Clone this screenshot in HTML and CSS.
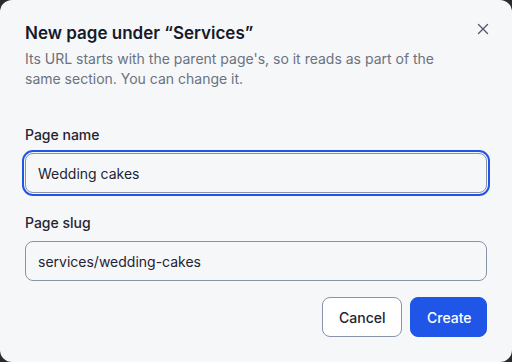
FILE: index.html
```html
<!DOCTYPE html>
<html lang="en">
<head>
    <meta charset="UTF-8">
    <meta name="viewport" content="width=device-width, initial-scale=1.0">
    <title>New page</title>
    <link rel="stylesheet" href="styles.css">
</head>
<body>
    <div class="dialog">
        <div class="dialog-head">
            <h1 class="title">New page under “Services”</h1>
            <button class="close" aria-label="Close">
                <svg width="12" height="12" viewBox="0 0 12 12">
                    <path d="M1.5 1.5l9 9M10.5 1.5l-9 9" stroke="#525b6e" stroke-width="1.4" stroke-linecap="round"/>
                </svg>
            </button>
        </div>
        <p class="desc">Its URL starts with the parent page's, so it reads as part of the same section. You can change it.</p>

        <form class="form">
            <div class="field">
                <label class="label" for="page-name">Page name</label>
                <input class="input focused" id="page-name" type="text" value="Wedding cakes">
            </div>
            <div class="field">
                <label class="label" for="page-slug">Page slug</label>
                <input class="input" id="page-slug" type="text" value="services/wedding-cakes">
            </div>
            <div class="actions">
                <button type="button" class="btn cancel">Cancel</button>
                <button type="button" class="btn create">Create</button>
            </div>
        </form>
    </div>
</body>
</html>
```

FILE: styles.css
```css
html, body {
    margin: 0;
    background-color: #2a2b2e;
}

.dialog {
    box-sizing: border-box;
    width: 512px;
    height: 362px;
    padding: 21px 25px 25px 25px;
    background-color: #f6f7f9;
    border-radius: 12px;
    font-family: Inter, "Noto Sans", sans-serif;
    color: #111827;
}

.dialog-head {
    display: flex;
    justify-content: space-between;
    align-items: flex-start;
}

.title {
    margin: 0;
    font-size: 17px;
    line-height: 24px;
    font-weight: 600;
    color: #141a2b;
}

.close {
    border: none;
    background: none;
    padding: 0;
    margin: -1px -5px 0 0;
    width: 18px;
    height: 18px;
    display: flex;
    align-items: center;
    justify-content: center;
}

.desc {
    margin: 4px 0 0 0;
    font-size: 14px;
    line-height: 20px;
    color: #6b7280;
    width: 420px;
}

.form {
    margin-top: 36px;
    display: flex;
    flex-direction: column;
    gap: 20px;
}

.field {
    display: flex;
    flex-direction: column;
    gap: 8px;
}

.label {
    font-size: 14px;
    line-height: 20px;
    font-weight: 500;
    color: #1f2433;
}

.input {
    box-sizing: border-box;
    height: 40px;
    width: 100%;
    padding: 0 12px;
    border: 1px solid #8a93a8;
    border-radius: 8px;
    background-color: #f6f7f9;
    font-family: inherit;
    font-size: 14px;
    color: #1f2433;
    outline: none;
}

.focused {
    outline: 2px solid #1f56e8;
    outline-offset: 1px;
}

.actions {
    margin-top: -4px;
    display: flex;
    justify-content: flex-end;
    gap: 8px;
}

.btn {
    box-sizing: border-box;
    height: 40px;
    padding: 0 16px;
    border-radius: 8px;
    font-family: inherit;
    font-size: 14px;
    font-weight: 500;
}

.cancel {
    background-color: #ffffff;
    border: 1px solid #8a93a8;
    color: #1f2433;
    width: 80px;
}

.create {
    background-color: #1f56e8;
    border: 1px solid #1f56e8;
    color: #ffffff;
    width: 77px;
}
```
